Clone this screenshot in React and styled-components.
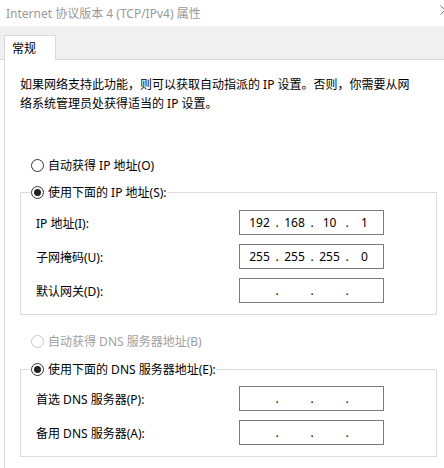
import React from "react";
import styled, { createGlobalStyle } from "styled-components";

const GlobalStyle = createGlobalStyle`
  body {
    margin: 0;
    background: #fff;
    font-family: "Noto Sans", "Noto Sans CJK SC", sans-serif;
    font-size: 12px;
    color: #000;
  }
`;

const Window = styled.div`
  width: 444px;
  height: 468px;
  overflow: hidden;
  background: #fff;
`;

const TitleBar = styled.div`
  height: 26px;
  display: flex;
  align-items: center;
  justify-content: space-between;
  padding-left: 6px;
  color: #999;
  overflow: hidden;
`;

const CloseIcon = styled.svg`
  width: 10px;
  height: 10px;
  margin-right: -6px;
  margin-bottom: 6px;
  flex: none;
`;

const TabStrip = styled.div`
  height: 34px;
  box-sizing: border-box;
  background: #f0f0f0;
  border-bottom: 1px solid #d9d9d9;
  display: flex;
  align-items: flex-end;
  padding-left: 4px;
`;

const Tab = styled.div`
  width: 52px;
  height: 25px;
  box-sizing: border-box;
  margin-bottom: -1px;
  background: #fff;
  border: 1px solid #d9d9d9;
  border-bottom: none;
  padding-left: 7px;
  display: flex;
  align-items: center;
`;

const Panel = styled.div`
  margin-left: 4px;
  border-left: 1px solid #d9d9d9;
  padding: 15px 0 0 15px;
  height: 420px;
`;

const Intro = styled.p`
  margin: 0;
  line-height: 19px;
  white-space: nowrap;
`;

const RadioRow = styled.label`
  display: flex;
  align-items: center;
  height: 20px;
  gap: 4px;
  margin: ${(p) => p.$top || 0}px 0 0 ${(p) => (p.$inset ? 11 : 0)}px;
  color: ${(p) => (p.$disabled ? "#a0a0a0" : "#000")};
  white-space: nowrap;
`;

const RadioDot = styled.span`
  width: 13px;
  height: 13px;
  box-sizing: border-box;
  border-radius: 50%;
  border: 1px solid ${(p) => (p.$disabled ? "#c8c8c8" : "#333")};
  background: #fff;
  display: flex;
  align-items: center;
  justify-content: center;
  flex: none;

  &::after {
    content: "";
    width: 7px;
    height: 7px;
    border-radius: 50%;
    background: #222;
    display: ${(p) => (p.$checked ? "block" : "none")};
  }
`;

const Group = styled.fieldset`
  margin: ${(p) => p.$top}px 0 0 0;
  width: 417px;
  box-sizing: border-box;
  min-inline-size: 0;
  border: 1px solid #dcdcdc;
  padding: 0 0 11px 10px;
`;

const Legend = styled.legend`
  padding: 0;
  margin: 0;
`;

const Fields = styled.div`
  display: grid;
  grid-template-columns: 208px 145px;
  grid-auto-rows: 25px;
  row-gap: 9px;
  margin-top: ${(p) => p.$top}px;
  align-items: center;
`;

const FieldLabel = styled.span`
  padding-left: 5px;
  white-space: nowrap;
`;

const AddressBox = styled.div`
  height: 25px;
  box-sizing: border-box;
  border: 1px solid #7a7a7a;
  padding-left: 4px;
  display: flex;
  align-items: center;
`;

const Octet = styled.span`
  width: 31px;
  text-align: center;
  flex: none;
`;

const Dot = styled.span`
  width: 4px;
  text-align: center;
  flex: none;
`;

function Address({ value = ["", "", "", ""] }) {
  return (
    <AddressBox>
      {value.map((part, i) => (
        <React.Fragment key={i}>
          <Octet>{part}</Octet>
          {i < 3 && <Dot>.</Dot>}
        </React.Fragment>
      ))}
    </AddressBox>
  );
}

function Radio({ children, checked, disabled, inset, top }) {
  return (
    <RadioRow $inset={inset} $top={top} $disabled={disabled}>
      <RadioDot $checked={checked} $disabled={disabled} />
      {children}
    </RadioRow>
  );
}

export default function App() {
  return (
    <Window>
      <GlobalStyle />
      <TitleBar>
        <span>Internet 协议版本 4 (TCP/IPv4) 属性</span>
        <CloseIcon viewBox="0 0 10 10">
          <path d="M0.5 0.5 L9.5 9.5 M9.5 0.5 L0.5 9.5" stroke="#777" strokeWidth="1" fill="none" />
        </CloseIcon>
      </TitleBar>
      <TabStrip>
        <Tab>常规</Tab>
      </TabStrip>
      <Panel>
        <Intro>
          如果网络支持此功能，则可以获取自动指派的 IP 设置。否则，你需要从网
          <br />
          络系统管理员处获得适当的 IP 设置。
        </Intro>

        <Radio inset top={42}>自动获得 IP 地址(O)</Radio>
        <Group $top={7}>
          <Legend>
            <Radio checked>使用下面的 IP 地址(S):</Radio>
          </Legend>
          <Fields $top={8}>
            <FieldLabel>IP 地址(I):</FieldLabel>
            <Address value={["192", "168", "10", "1"]} />
            <FieldLabel>子网掩码(U):</FieldLabel>
            <Address value={["255", "255", "255", "0"]} />
            <FieldLabel>默认网关(D):</FieldLabel>
            <Address />
          </Fields>
        </Group>

        <Radio inset disabled top={16}>自动获得 DNS 服务器地址(B)</Radio>
        <Group $top={8}>
          <Legend>
            <Radio checked>使用下面的 DNS 服务器地址(E):</Radio>
          </Legend>
          <Fields $top={7}>
            <FieldLabel>首选 DNS 服务器(P):</FieldLabel>
            <Address />
            <FieldLabel>备用 DNS 服务器(A):</FieldLabel>
            <Address />
          </Fields>
        </Group>
      </Panel>
    </Window>
  );
}
